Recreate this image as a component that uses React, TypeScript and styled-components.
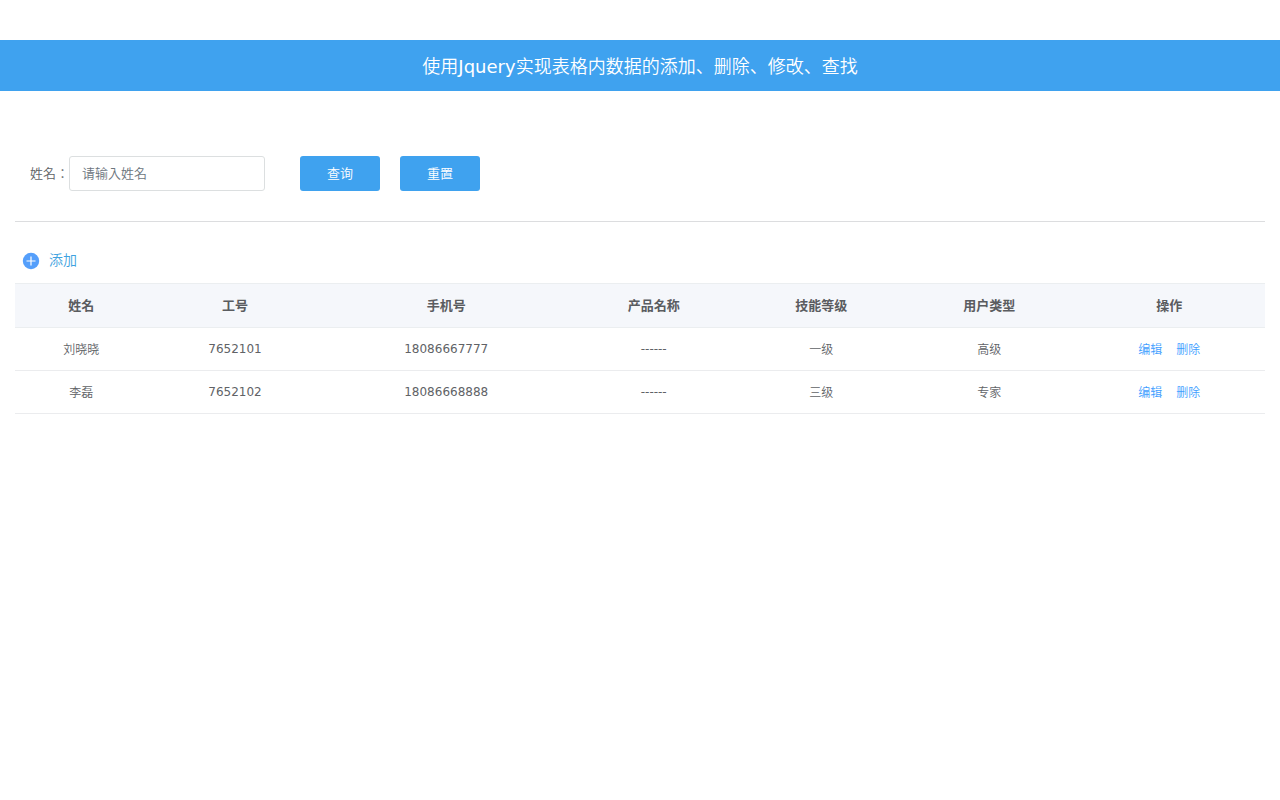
import React, { useState } from "react";
import styled, { createGlobalStyle } from "styled-components";

const GlobalStyle = createGlobalStyle`
  *, *::before, *::after {
    box-sizing: border-box;
  }
  body {
    margin: 0;
    background: #fff;
    color: #606266;
    font-family: "DejaVu Sans", "Noto Sans CJK JP", "Noto Sans CJK SC", sans-serif;
    font-size: 13px;
    font-weight: 350;
  }
  button, input {
    font: inherit;
  }
`;

const Banner = styled.header`
  margin-top: 40px;
  padding: 13px 16px 11px;
  background: #3fa2ef;
`;

const Title = styled.h1`
  margin: 0;
  color: #fff;
  font-size: 18px;
  font-weight: 350;
  line-height: 27px;
  text-align: center;
`;

const Latin = styled.span`
  font-weight: 400;
`;

const Content = styled.main`
  padding: 50px 15px 16px;
`;

const SearchForm = styled.form`
  display: flex;
  align-items: center;
  gap: 20px;
  padding: 15px 15px 30px;
  border-bottom: 1px solid #dcdddf;
`;

const Field = styled.div`
  display: flex;
  align-items: center;
  margin-right: 15px;
`;

const Label = styled.label`
  padding-bottom: 2px;
`;

const TextInput = styled.input`
  width: 196px;
  height: 35px;
  padding: 0 12px;
  border: 1px solid #dcdfe0;
  border-radius: 3px;
  outline: none;
  background: #fff;
  color: #606266;

  &::placeholder {
    color: #6c757d;
    opacity: 1;
  }
  &:focus {
    border-color: #3fa2ef;
  }
`;

const Button = styled.button`
  width: 80px;
  height: 35px;
  padding: 0 0 2px;
  border: 0;
  border-radius: 3px;
  background: #3fa2ef;
  color: #fff;
  cursor: pointer;
`;

const AddButton = styled.button`
  display: flex;
  align-items: center;
  gap: 9px;
  margin: 28px 0 12px 7px;
  padding: 0;
  border: 0;
  background: none;
  color: #3ea2e0;
  font-size: 14px;
  line-height: 21px;
  cursor: pointer;
`;

const Table = styled.table`
  width: 100%;
  border-collapse: separate;
  border-spacing: 0;
  table-layout: fixed;
  text-align: center;
`;

const Column = styled.col<{ $share: number }>`
  width: ${(p) => p.$share}%;
`;

const HeadCell = styled.th`
  height: 45px;
  padding: 0 12px 2px;
  border: solid #ebeef0;
  border-width: 1px 0;
  background: #f5f7fb;
  color: #5a5c60;
  font-size: 13px;
  font-weight: 700;
`;

const Cell = styled.td<{ $numeric?: boolean }>`
  height: 43px;
  padding: ${(p) => (p.$numeric ? "0 12px" : "0 12px 2px")};
  border-bottom: 1px solid #ebecee;
  font-size: 12px;
  font-weight: ${(p) => (p.$numeric ? 400 : 350)};
`;

const Actions = styled.div`
  display: flex;
  justify-content: center;
  gap: 14px;
`;

const ActionLink = styled.a`
  color: #409eff;
  text-decoration: none;
  white-space: nowrap;
`;

type Worker = {
  name: string;
  id: string;
  phone: string;
  product: string;
  level: string;
  type: string;
};

const workers: Worker[] = [
  { name: "刘晓晓", id: "7652101", phone: "18086667777", product: "------", level: "一级", type: "高级" },
  { name: "李磊", id: "7652102", phone: "18086668888", product: "------", level: "三级", type: "专家" },
];

const columns = [
  { label: "姓名", share: 10.6 },
  { label: "工号", share: 14 },
  { label: "手机号", share: 19.8 },
  { label: "产品名称", share: 13.4 },
  { label: "技能等级", share: 13.4 },
  { label: "用户类型", share: 13.5 },
  { label: "操作", share: 15.3 },
];

function PlusIcon() {
  return (
    <svg width="18" height="18" viewBox="0 0 18 18" aria-hidden="true">
      <circle cx="9" cy="9" r="8.2" fill="#559ffb" />
      <path d="M9 4.5v9M4.5 9h9" stroke="#fff" strokeWidth="1.2" />
    </svg>
  );
}

export default function App() {
  const [draft, setDraft] = useState("");
  const [query, setQuery] = useState("");
  const rows = workers.filter((w) => w.name.includes(query));

  return (
    <>
      <GlobalStyle />
      <Banner>
        <Title>
          使用<Latin>Jquery</Latin>实现表格内数据的添加、删除、修改、查找
        </Title>
      </Banner>
      <Content>
        <SearchForm
          onSubmit={(e) => {
            e.preventDefault();
            setQuery(draft.trim());
          }}
          onReset={() => {
            setDraft("");
            setQuery("");
          }}
        >
          <Field>
            <Label htmlFor="name">姓名：</Label>
            <TextInput
              id="name"
              type="text"
              placeholder="请输入姓名"
              value={draft}
              onChange={(e) => setDraft(e.target.value)}
            />
          </Field>
          <Button type="submit">查询</Button>
          <Button type="reset">重置</Button>
        </SearchForm>
        <AddButton type="button">
          <PlusIcon />
          添加
        </AddButton>
        <Table>
          <colgroup>
            {columns.map((c) => (
              <Column key={c.label} $share={c.share} />
            ))}
          </colgroup>
          <thead>
            <tr>
              {columns.map((c) => (
                <HeadCell key={c.label} scope="col">{c.label}</HeadCell>
              ))}
            </tr>
          </thead>
          <tbody>
            {rows.map((w) => (
              <tr key={w.id}>
                <Cell>{w.name}</Cell>
                <Cell $numeric>{w.id}</Cell>
                <Cell $numeric>{w.phone}</Cell>
                <Cell $numeric>{w.product}</Cell>
                <Cell>{w.level}</Cell>
                <Cell>{w.type}</Cell>
                <Cell>
                  <Actions>
                    <ActionLink href="#edit">编辑</ActionLink>
                    <ActionLink href="#delete">删除</ActionLink>
                  </Actions>
                </Cell>
              </tr>
            ))}
          </tbody>
        </Table>
      </Content>
    </>
  );
}
